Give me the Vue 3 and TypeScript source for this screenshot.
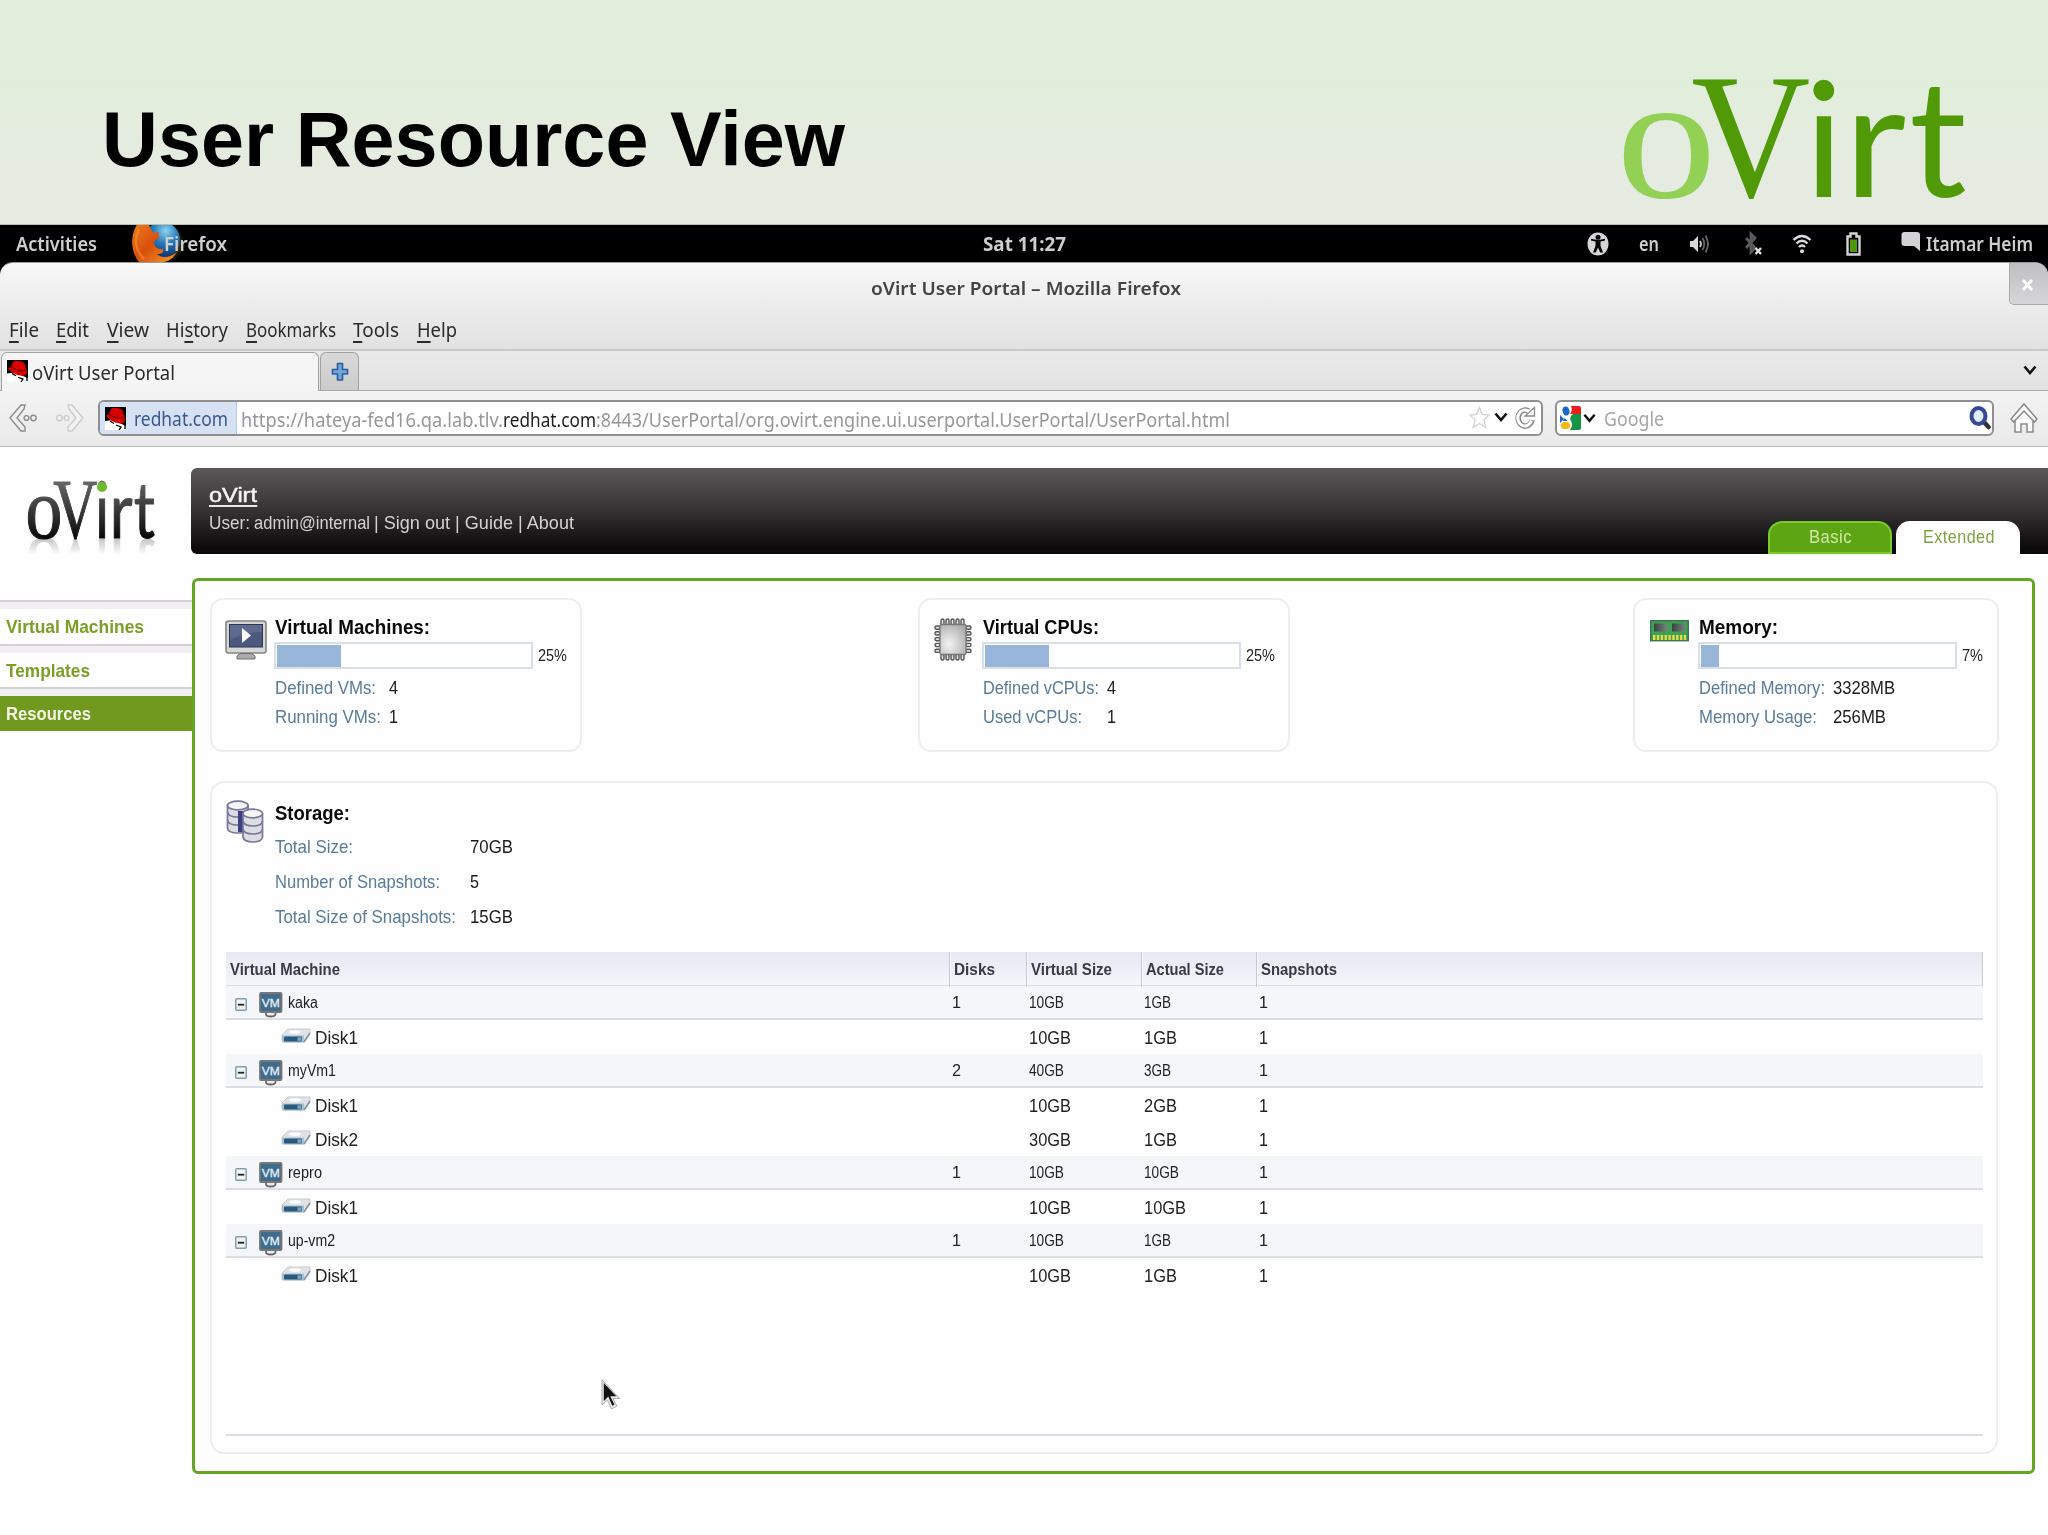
<script setup lang="ts">
import type { Directive } from 'vue'

// Condenses or widens a run of text to the given width in pixels.
const vFit: Directive<HTMLElement, number> = {
  mounted(el, binding) {
    el.style.display = 'inline-block'
    const natural = el.getBoundingClientRect().width
    el.style.transformOrigin = '0 50%'
    el.style.transform = `scaleX(${binding.value / natural})`
    el.style.marginRight = `${binding.value - natural}px`
  },
}

interface Glyph { ch: string; font: string; weight: number; x: number; y: number; sx: number; sy: number; cls: string }
const wordmark: Glyph[] = [
  { ch: 'o', font: 'Liberation Serif', weight: 400, x: 109, y: 441, sx: 6, sy: 5.36, cls: 'wm-o' },
  { ch: 'V', font: 'Liberation Serif', weight: 400, x: 334, y: 437, sx: 4.95, sy: 5.34, cls: 'wm-v' },
  { ch: 'i', font: 'Lato', weight: 400, x: 674, y: 441, sx: 4.8, sy: 4.8, cls: 'wm-s' },
  { ch: 'r', font: 'Lato', weight: 400, x: 793, y: 441, sx: 5.1, sy: 4.8, cls: 'wm-s' },
  { ch: 't', font: 'Lato', weight: 400, x: 988, y: 441, sx: 4.8, sy: 4.9, cls: 'wm-s' },
]

interface Menu { pre: string; key: string; post: string; w: number }
const menus: Menu[] = [
  { pre: '', key: 'F', post: 'ile', w: 30 },
  { pre: '', key: 'E', post: 'dit', w: 33 },
  { pre: '', key: 'V', post: 'iew', w: 42 },
  { pre: 'Hi', key: 's', post: 'tory', w: 62 },
  { pre: '', key: 'B', post: 'ookmarks', w: 90 },
  { pre: '', key: 'T', post: 'ools', w: 46 },
  { pre: '', key: 'H', post: 'elp', w: 40 },
]

const nav = [
  { label: 'Virtual Machines', w: 138, active: false },
  { label: 'Templates', w: 84, active: false },
  { label: 'Resources', w: 85, active: true },
]

interface Stat { label: string; w: number; value: string; vw: number }
interface Card { icon: string; title: string; tw: number; pct: string; pw: number; fill: number; labelCol: number; stats: Stat[] }
const cards: Card[] = [
  {
    icon: 'screen', title: 'Virtual Machines:', tw: 155, pct: '25%', pw: 29, fill: 64, labelCol: 114,
    stats: [{ label: 'Defined VMs:', w: 101, value: '4', vw: 9 }, { label: 'Running VMs:', w: 106, value: '1', vw: 9 }],
  },
  {
    icon: 'cpu', title: 'Virtual CPUs:', tw: 116, pct: '25%', pw: 29, fill: 64, labelCol: 124,
    stats: [{ label: 'Defined vCPUs:', w: 116, value: '4', vw: 9 }, { label: 'Used vCPUs:', w: 99, value: '1', vw: 9 }],
  },
  {
    icon: 'mem', title: 'Memory:', tw: 79, pct: '7%', pw: 21, fill: 18, labelCol: 134,
    stats: [{ label: 'Defined Memory:', w: 126, value: '3328MB', vw: 62 }, { label: 'Memory Usage:', w: 118, value: '256MB', vw: 53 }],
  },
]

const storage: Stat[] = [
  { label: 'Total Size:', w: 78, value: '70GB', vw: 43 },
  { label: 'Number of Snapshots:', w: 165, value: '5', vw: 9 },
  { label: 'Total Size of Snapshots:', w: 181, value: '15GB', vw: 43 },
]

const columns = [
  { label: 'Virtual Machine', w: 110 },
  { label: 'Disks', w: 41 },
  { label: 'Virtual Size', w: 81 },
  { label: 'Actual Size', w: 78 },
  { label: 'Snapshots', w: 76 },
]

interface Row { kind: 'group' | 'disk'; name: string; w: number; disks: string; virt: string; actual: string; snaps: string }
const rows: Row[] = [
  { kind: 'group', name: 'kaka', w: 30, disks: '1', virt: '10GB', actual: '1GB', snaps: '1' },
  { kind: 'disk', name: 'Disk1', w: 43, disks: '', virt: '10GB', actual: '1GB', snaps: '1' },
  { kind: 'group', name: 'myVm1', w: 48, disks: '2', virt: '40GB', actual: '3GB', snaps: '1' },
  { kind: 'disk', name: 'Disk1', w: 43, disks: '', virt: '10GB', actual: '2GB', snaps: '1' },
  { kind: 'disk', name: 'Disk2', w: 43, disks: '', virt: '30GB', actual: '1GB', snaps: '1' },
  { kind: 'group', name: 'repro', w: 34, disks: '1', virt: '10GB', actual: '10GB', snaps: '1' },
  { kind: 'disk', name: 'Disk1', w: 43, disks: '', virt: '10GB', actual: '10GB', snaps: '1' },
  { kind: 'group', name: 'up-vm2', w: 47, disks: '1', virt: '10GB', actual: '1GB', snaps: '1' },
  { kind: 'disk', name: 'Disk1', w: 43, disks: '', virt: '10GB', actual: '1GB', snaps: '1' },
]
const sizeWidth = (kind: string, text: string): number =>
  kind === 'group' ? (text.length === 4 ? 35 : 27) : text.length === 4 ? 42 : 33

const pins = [0, 1, 2, 3, 4]
</script>

<template>
  <div class="slide">
    <header class="banner">
      <h1 class="heading"><span v-fit="743">User Resource View</span></h1>
      <svg class="brand" viewBox="0 0 1404 522">
        <text
          v-for="g in wordmark" :key="g.ch" :class="g.cls" font-size="100"
          :font-family="g.font" :font-weight="g.weight"
          :transform="`translate(${g.x} ${g.y}) scale(${g.sx} ${g.sy})`"
        >{{ g.ch }}</text>
        <circle cx="731" cy="120" r="31" fill="#4f9a06" />
      </svg>
    </header>

    <div class="topbar">
      <span class="activities"><span v-fit="81">Activities</span></span>
      <span class="app">
        <svg class="fox" width="56" height="37" viewBox="0 0 56 37">
          <defs>
            <radialGradient id="globe" cx=".6" cy=".25" r=".75"><stop offset="0" stop-color="#8fd4ee" /><stop offset=".45" stop-color="#2a7dbd" /><stop offset="1" stop-color="#0c2c66" /></radialGradient>
            <linearGradient id="fur" x1="0" y1="0" x2="1" y2="1"><stop offset="0" stop-color="#ef7a1c" /><stop offset=".5" stop-color="#d94f0d" /><stop offset="1" stop-color="#f59a27" /></linearGradient>
            <radialGradient id="glow"><stop offset=".6" stop-color="#8d7413" stop-opacity=".8" /><stop offset="1" stop-color="#000" stop-opacity="0" /></radialGradient>
          </defs>
          <circle cx="34" cy="18" r="21" fill="url(#glow)" />
          <circle cx="31" cy="15" r="18" fill="url(#globe)" />
          <path d="M7-2C-1 9-1 26 8 37H33C39 36 43 32 45 28C38 33 30 33 26 29C32 29 33 26 32 24C27 25 24 22 23 18C23 15 26 14 29 13C27 11 27 10 28 7L23 8C20 5 18 2 18-2Z" fill="url(#fur)" />
          <path d="M8 4C3 14 4 25 13 34" fill="none" stroke="#f39531" stroke-width="2.5" opacity=".6" />
        </svg>
        <span class="app-name"><span v-fit="63">Firefox</span></span>
      </span>
      <span class="clock"><span v-fit="83">Sat 11:27</span></span>
      <span class="status">
        <svg width="22" height="24" viewBox="0 0 22 24" class="s-access"><ellipse cx="11" cy="12" rx="10.500" ry="11.500" fill="#d6d6d6" /><circle cx="11" cy="5.300" r="2.500" /><path d="M4 8.500L8.500 9.500V14L6 20.500H8.800L11 15.500L13.200 20.500H16L13.500 14V9.500L18 8.500V6.800L13 7.800H9L4 6.800Z" /></svg>
        <span class="s-lang"><span v-fit="20">en</span></span>
        <svg width="22" height="22" viewBox="0 0 22 22" class="s-vol"><path d="M1 8H4L9 3V19L4 14H1Z" fill="#d8d8d8" /><path d="M11 8Q13 11 11 14" fill="none" stroke="#c8c8c8" stroke-width="1.800" /><path d="M13.500 5Q17 11 13.500 17M16.500 2.500Q21.500 11 16.500 19.500" fill="none" stroke="#666" stroke-width="1.800" /></svg>
        <svg width="20" height="26" viewBox="0 0 20 26" class="s-bt"><path d="M2 7L11 17L7 21V3L11 7L2 17" fill="none" stroke="#5b5b5b" stroke-width="2.800" /><path d="M11.500 17L17 23M17 17L11.500 23" stroke="#e4e4e4" stroke-width="2.400" /></svg>
        <svg width="20" height="22" viewBox="0 0 20 22" class="s-wifi" fill="none" stroke="#dadada" stroke-width="2.400"><path d="M1.500 7Q10-1 18.500 7M4.500 10.500Q10 5 15.500 10.500M7 14Q10 11 13 14" /><circle cx="10" cy="18.300" r="2" fill="#dadada" stroke="none" /></svg>
        <svg width="16" height="24" viewBox="0 0 16 24" class="s-bat"><path d="M4.500 1.500H10.500V4.500H13.500V22.500H1.500V4.500H4.500Z" fill="#000" stroke="#d4d4d4" stroke-width="2.400" /><rect x="4" y="7.500" width="7" height="12.500" fill="#4e9a06" /></svg>
        <svg width="20" height="22" viewBox="0 0 20 22" class="s-chat"><path d="M3.500 1H16Q19 1 19 4V20L13 15H3.500Q.5 15 .5 12V4Q.5 1 3.500 1Z" fill="#d3d3d3" /></svg>
        <span class="s-user"><span v-fit="107">Itamar Heim</span></span>
      </span>
    </div>

    <div class="window-back">
      <div class="window">
        <div class="titlebar">
          <span class="win-title"><span v-fit="310">oVirt User Portal – Mozilla Firefox</span></span>
          <span class="win-close"><svg width="14" height="14" viewBox="0 0 14 14"><path d="M2 2L11 12M11 2L2 12" stroke="#fff" stroke-width="2.800" /></svg></span>
        </div>
        <nav class="menubar">
          <span v-for="m in menus" :key="m.key" v-fit="m.w">{{ m.pre }}<u>{{ m.key }}</u>{{ m.post }}</span>
        </nav>
        <div class="tabstrip">
          <div class="tab">
            <svg class="hat" width="21" height="22" viewBox="0 0 21 23" preserveAspectRatio="none"><rect width="21" height="23" fill="#000" /><path d="M0 14L8 13L21 19V23H0Z" fill="#fff" /><path d="M1 8.500L4 7L6 2Q8 0 11 1Q17 1 18 5L20 12Q20 17 15 16.500Q5 15 1 8.500Z" fill="#d80000" /><path d="M4 7Q10 12.500 18.500 10.500" fill="none" stroke="#7a0000" stroke-width="1.200" /><path d="M5 14L9 16.500M11 18L16 20L14 23M20 17V22" stroke="#000" stroke-width="1.300" fill="none" /></svg>
            <span class="tab-text"><span v-fit="143">oVirt User Portal</span></span>
          </div>
          <div class="tab-new"><svg width="18" height="20" viewBox="0 0 18 20"><path d="M6.500 1.500H11.500V7.500H16.500V12H11.500V18H6.500V12H1.500V7.500H6.500Z" fill="#6ea6dc" stroke="#2d5c98" stroke-width="1.600" stroke-linejoin="round" /></svg></div>
          <svg class="tab-list" width="14" height="10" viewBox="0 0 14 10"><path d="M1.500 1.500L7 8L12.500 1.500" fill="none" stroke="#111" stroke-width="2.600" /></svg>
        </div>
        <div class="toolbar">
          <svg class="t-back" width="29" height="30" viewBox="0 0 29 30" fill="#f0f0f0" stroke="#8c8c8c" stroke-width="1.400"><path d="M1 15L12 2H16L15 6L8 15L16 24V28H12Z" /><circle cx="17.500" cy="15" r="2.400" /><circle cx="24.500" cy="15" r="2.700" /></svg>
          <svg class="t-fwd" width="29" height="30" viewBox="0 0 29 30" fill="#f2f2f2" stroke="#ccc" stroke-width="1.400"><path d="M28 15L17 2H13L14 6L21 15L13 24V28H17Z" /><circle cx="11.500" cy="15" r="2.400" /><circle cx="4.500" cy="15" r="2.700" /></svg>
          <div class="urlbar">
            <div class="identity">
              <svg class="hat" width="21" height="23" viewBox="0 0 21 23"><rect width="21" height="23" fill="#000" /><path d="M0 14L8 13L21 19V23H0Z" fill="#fff" /><path d="M1 8.500L4 7L6 2Q8 0 11 1Q17 1 18 5L20 12Q20 17 15 16.500Q5 15 1 8.500Z" fill="#d80000" /><path d="M4 7Q10 12.500 18.500 10.500" fill="none" stroke="#7a0000" stroke-width="1.200" /><path d="M5 14L9 16.500M11 18L16 20L14 23M20 17V22" stroke="#000" stroke-width="1.300" fill="none" /></svg>
              <span class="id-text"><span v-fit="94">redhat.com</span></span>
            </div>
            <span class="url"><span v-fit="262">https://hateya-fed16.qa.lab.tlv.</span><span v-fit="93" class="host">redhat.com</span><span v-fit="634">:8443/UserPortal/org.ovirt.engine.ui.userportal.UserPortal/UserPortal.html</span></span>
            <span class="url-icons">
              <svg width="21" height="23" viewBox="0 0 21 23"><path d="M10.500 1.500L13.300 8.500L20 9L15 13.800L16.800 21.500L10.500 17.500L4.200 21.500L6 13.800L1 9L7.700 8.500Z" fill="#fff" stroke="#d2d2d2" stroke-width="1.300" /></svg>
              <svg width="14" height="10" viewBox="0 0 14 10"><path d="M1.500 1.500L7 8L12.500 1.500" fill="none" stroke="#111" stroke-width="2.600" /></svg>
              <svg class="u-reload" width="21" height="23" viewBox="0 0 21 23"><path d="M17 14A7 8 0 1 1 13.500 5" fill="none" stroke="#8a8a8a" stroke-width="5.600" /><path d="M10 10H19.500V1.500Z" fill="#fff" stroke="#8a8a8a" stroke-width="1.300" /><path d="M16.500 14.500A7 8 0 1 1 14 5.500" fill="none" stroke="#fff" stroke-width="3" /></svg>
            </span>
          </div>
          <div class="search">
            <svg width="21" height="24" viewBox="0 0 21 24"><rect width="21" height="24" rx="2" fill="#fff" /><path d="M11 0H19Q21 0 21 2V8H10Q13 4 11 0Z" fill="#ee1c1c" /><path d="M13 8H21V22Q21 24 19 24H10Q14 19 10 13Q11 9 13 8Z" fill="#159447" /><path d="M0 9L4 13L0 17Z" fill="#1c66c9" /><ellipse cx="6" cy="5" rx="3.400" ry="4.600" fill="#1c66c9" transform="rotate(-15 6 5)" /><path d="M4 12L8 15L3 15Z" fill="#1c66c9" /><ellipse cx="5.500" cy="19.500" rx="4.800" ry="3.800" fill="#f2b90f" /></svg>
            <svg class="s-chev" width="13" height="10" viewBox="0 0 14 10"><path d="M1.500 1.500L7 8L12.500 1.500" fill="none" stroke="#111" stroke-width="2.600" /></svg>
            <span class="hint"><span v-fit="60">Google</span></span>
            <svg class="s-mag" width="22" height="24" viewBox="0 0 22 24"><path d="M14 15L19.500 21" stroke="#333" stroke-width="4.500" stroke-linecap="round" /><ellipse cx="9.500" cy="10" rx="7" ry="8" fill="#e4edfb" stroke="#36489c" stroke-width="4" /></svg>
          </div>
          <svg class="t-home" width="28" height="32" viewBox="0 0 28 32" fill="#fafafa" stroke="#8a8a8a" stroke-width="1.500"><path d="M5 17V30H11V22H17V30H23V17L14 8Z" /><path d="M1 17L14 2L27 17L24.500 20L14 9L3.500 20Z" /></svg>
        </div>
      </div>
    </div>

    <main class="page">
      <div class="masthead">
        <div class="logo-box">
          <svg class="small-logo" width="130" height="62" viewBox="0 0 130 62">
            <defs><linearGradient id="ink" x1="0" y1="0" x2="0" y2="1"><stop offset=".2" stop-color="#686868" /><stop offset=".8" stop-color="#0c0c0c" /></linearGradient></defs>
            <g transform="translate(-15 -11.400) scale(.1232 .16)" fill="url(#ink)" stroke="url(#ink)" stroke-width="1.300">
              <text
                v-for="g in wordmark" :key="g.ch" font-size="100" :font-family="g.font" :font-weight="g.weight"
                :transform="`translate(${g.x} ${g.y}) scale(${g.sx} ${g.sy})`"
              >{{ g.ch }}</text>
            </g>
            <circle cx="75" cy="8" r="5" fill="#6dbb2a" />
          </svg>
        </div>
        <div class="bar">
          <div class="who">
            <div class="product"><span v-fit="48">oVirt</span></div>
            <div class="links"><span v-fit="41">User:</span><span v-fit="116" class="login">admin@internal</span><span v-fit="200">| Sign out | Guide | About</span></div>
          </div>
          <div class="modes">
            <span class="mode basic"><span v-fit="43">Basic</span></span>
            <span class="mode extended"><span v-fit="72">Extended</span></span>
          </div>
        </div>
      </div>

      <div class="body">
        <aside class="side">
          <div v-for="n in nav" :key="n.label" class="side-item" :class="{ active: n.active }">
            <div class="side-label"><span v-fit="n.w">{{ n.label }}</span></div>
          </div>
        </aside>

        <section class="panel">
          <div class="cards">
            <div v-for="c in cards" :key="c.title" class="card" :class="c.icon">
              <div class="card-icon">
                <svg v-if="c.icon === 'screen'" width="42" height="41" viewBox="0 0 42 41"><rect x="1" y="1" width="40" height="32" rx="2.500" fill="#d7d7d7" stroke="#858585" stroke-width="1.600" /><rect x="4.500" y="4.500" width="33" height="22.500" fill="#4c587e" stroke="#2e3650" /><path d="M5 5H37V12Q20 12 5 20Z" fill="#6c7899" opacity=".6" /><path d="M17 8L26 15.500L17 23Z" fill="#fff" /><path d="M15 33.500H27L30 36V39H12V36Z" fill="#aaa" stroke="#707070" /></svg>
                <svg v-else-if="c.icon === 'cpu'" width="38" height="43" viewBox="0 0 38 43">
                  <defs><radialGradient id="die" cx=".35" cy=".65" r=".8"><stop offset="0" stop-color="#f4f4f4" /><stop offset="1" stop-color="#a9a9a9" /></radialGradient></defs>
                  <g fill="#e4e4e4" stroke="#555" stroke-width="1.400">
                    <template v-for="p in pins" :key="p">
                      <rect :x="7 + p * 5" y="1" width="3" height="6" rx="1.500" /><rect :x="7 + p * 5" y="36" width="3" height="6" rx="1.500" />
                      <rect x="1" :y="8 + p * 5.800" width="5" height="3.200" rx="1.500" /><rect x="32" :y="8 + p * 5.800" width="5" height="3.200" rx="1.500" />
                    </template>
                  </g>
                  <rect x="6" y="6.500" width="26" height="30" rx="1.500" fill="url(#die)" stroke="#777" stroke-width="1.300" />
                </svg>
                <svg v-else width="39" height="22" viewBox="0 0 39 22">
                  <defs><linearGradient id="chip"><stop offset="0" stop-color="#39433f" /><stop offset="1" stop-color="#77827c" /></linearGradient></defs>
                  <rect x=".7" y=".7" width="37.600" height="20" fill="#3fa158" stroke="#3c7350" stroke-width="1.400" /><rect x="4" y="3.500" width="13" height="8" fill="url(#chip)" /><rect x="22" y="3.500" width="13" height="8" fill="url(#chip)" /><path d="M3 17.500H37" stroke="#e6dc3c" stroke-width="5" stroke-dasharray="2.400 1.450" />
                </svg>
              </div>
              <div class="card-body">
                <div class="card-title"><span v-fit="c.tw">{{ c.title }}</span></div>
                <div class="meter-row">
                  <div class="meter"><div class="meter-fill" :style="{ width: c.fill + 'px' }" /></div>
                  <span class="pct"><span v-fit="c.pw">{{ c.pct }}</span></span>
                </div>
                <div v-for="s in c.stats" :key="s.label" class="stat">
                  <span class="key" :style="{ width: c.labelCol + 'px' }"><span v-fit="s.w">{{ s.label }}</span></span>
                  <span><span v-fit="s.vw">{{ s.value }}</span></span>
                </div>
              </div>
            </div>
          </div>

          <div class="storage">
            <div class="storage-top">
              <svg class="storage-icon" width="38" height="43" viewBox="0 0 38 43">
                <g fill="#dcdce2" stroke="#77779a" stroke-width="1.700">
                  <path d="M1.500 5V28Q2 33 12 33Q22 33 22 28V5Z" /><path d="M1.500 12Q2 17 12 17Q22 17 22 12M1.500 20Q2 25 12 25Q22 25 22 20" fill="none" />
                  <ellipse cx="11.800" cy="5.500" rx="10.300" ry="4.300" fill="#f5f5f8" />
                  <rect x="12" y="11" width="6" height="21" fill="#3c4080" stroke="none" />
                  <path d="M17 14V37Q18 42 27 42Q36 42 36.500 37V14Z" /><path d="M17 21Q18 26 27 26Q36 26 36.500 21M17 29Q18 34 27 34Q36 34 36.500 29" fill="none" />
                  <ellipse cx="26.700" cy="13.500" rx="9.800" ry="4.300" fill="#f5f5f8" />
                </g>
              </svg>
              <div class="storage-body">
                <div class="card-title"><span v-fit="75">Storage:</span></div>
                <div v-for="s in storage" :key="s.label" class="stat tall">
                  <span class="key wide"><span v-fit="s.w">{{ s.label }}</span></span>
                  <span><span v-fit="s.vw">{{ s.value }}</span></span>
                </div>
              </div>
            </div>

            <div class="table">
              <div class="row head">
                <div v-for="c in columns" :key="c.label" class="hcell"><span v-fit="c.w">{{ c.label }}</span></div>
              </div>
              <div v-for="(r, i) in rows" :key="i" class="row" :class="r.kind">
                <div class="name">
                  <template v-if="r.kind === 'group'">
                    <svg class="toggle" width="12" height="13" viewBox="0 0 12 13"><rect x=".75" y=".75" width="10.500" height="11.500" rx="1" fill="#f3f3ee" stroke="#7fa0b8" stroke-width="1.500" /><path d="M2.800 6.700H9.200" stroke="#222" stroke-width="1.800" /></svg>
                    <svg class="vm-icon" width="24" height="26" viewBox="0 0 24 26"><path d="M7 19V22Q7 24.500 11.500 24.500Q16.500 24.500 16.500 22V19Z" fill="#eee" stroke="#666" stroke-width="1.800" /><rect x="1" y="1" width="21.500" height="19" rx="1" fill="#3f6c8d" stroke="#777" stroke-width="1.800" /><text x="2.800" y="14.500" font-family="Liberation Sans" font-size="11.500" font-weight="400" fill="#e4f0f8" stroke="#e4f0f8" stroke-width=".3" textLength="18" lengthAdjust="spacingAndGlyphs">VM</text></svg>
                  </template>
                  <svg v-else class="disk-icon" width="30" height="17" viewBox="0 0 30 17"><path d="M1 7L7 1H29V5L23 14H3Q1 14 1 12Z" fill="#e0e2e6" stroke="#c6cbd0" /><path d="M1 7.500H23V14.500H3Q1 14.500 1 13Z" fill="#a9bfce" /><rect x="3" y="8.500" width="18" height="5" rx="1" fill="#285a80" /><rect x="16.500" y="9.300" width="4" height="3.500" fill="#7fa3bb" /><path d="M23 14L29 5" stroke="#7b93a6" stroke-width="1.600" /><ellipse cx="14" cy="4" rx="6" ry="1.800" fill="#fff" /></svg>
                  <span v-fit="r.w">{{ r.name }}</span>
                </div>
                <div class="cell"><span v-if="r.disks" v-fit="9">{{ r.disks }}</span></div>
                <div class="cell"><span v-fit="sizeWidth(r.kind, r.virt)">{{ r.virt }}</span></div>
                <div class="cell"><span v-fit="sizeWidth(r.kind, r.actual)">{{ r.actual }}</span></div>
                <div class="cell"><span v-fit="9">{{ r.snaps }}</span></div>
              </div>
            </div>
          </div>
        </section>
      </div>
    </main>

    <svg class="pointer" width="20" height="32" viewBox="0 0 20 32"><path d="M2 2V24L7 19L11 28L14.500 26L10.500 18H17Z" fill="#111" stroke="#e8e8e8" stroke-width="1.600" /><path d="M1 1V26L6.500 21L10.500 30L16 27L12 19.500H18.500Z" fill="none" stroke="#999" stroke-width=".8" /></svg>
  </div>
</template>

<style>
body { margin: 0; background: #fefefe; }
</style>

<style scoped>
.slide { position: relative; width: 2048px; height: 1535px; overflow: hidden; display: flex; flex-direction: column; background: #fefefe; font-family: "Liberation Sans", Arial, sans-serif; white-space: nowrap; }
.slide svg { flex: none; display: block; }

.banner { box-sizing: border-box; height: 225px; flex: none; display: flex; justify-content: space-between; align-items: flex-start; background: linear-gradient(#e1eedb 30%, #e5ebe0 75%); border-bottom: 1px solid #b9c1b3; }
.heading { margin: 95px 0 0 102px; font-size: 77px; line-height: 88px; font-weight: 700; color: #000; }
.brand { width: 468px; height: 174px; margin-top: 50px; overflow: visible; }
.wm-o { fill: #92d056; }
.wm-v { fill: #4f9a06; }
.wm-s { fill: #4f9a06; }

.topbar { height: 37px; flex: none; display: grid; grid-template-columns: 1fr 82px 1fr; background: #000; color: #cfcfcf; font-family: "Noto Sans", sans-serif; font-size: 19px; font-weight: 600; line-height: 39px; align-items: start; grid-template-areas: "l c r"; }
.activities { grid-area: l; padding-left: 16px; }
.app { grid-area: l; display: flex; margin-left: 131px; height: 37px; }
.fox { margin-right: -23px; }
.app-name { position: relative; }
.clock { grid-area: c; font-weight: 700; }
.status { grid-area: r; display: flex; justify-content: flex-end; align-items: center; padding-right: 15px; height: 37px; font-weight: 600; }
.status > span { height: 37px; }
.s-lang { margin-left: 30px; }
.s-vol { margin-left: 30px; }
.s-bt { margin-left: 33px; }
.s-wifi { margin-left: 28px; }
.s-bat { margin-left: 34px; }
.s-chat { margin-left: 39px; margin-top: -4px; }
.s-user { margin-left: 5px; }

.window-back { background: #000; flex: none; }
.window { height: 185px; box-sizing: border-box; border-top: 1px solid #9a9a9e; border-radius: 13px 13px 0 0; overflow: hidden; background: linear-gradient(#f8f8f9, #ededee 40px, #e1e1e1 87px); font-family: "Noto Sans", sans-serif; display: flex; flex-direction: column; }
.titlebar { height: 48px; display: grid; grid-template-columns: 871px 1fr 39px; }
.win-title { grid-column: 2; font-size: 18.500px; line-height: 49px; font-weight: 650; color: #444; }
.win-close { height: 42px; box-sizing: border-box; border: solid #a9a9ab; border-width: 0 0 1px 1px; border-bottom-left-radius: 5px; background: linear-gradient(#bfbfc1, #d6d6d8); display: flex; align-items: center; justify-content: center; padding: 2px 2px 0 0; }
.menubar { height: 38px; display: flex; gap: 17.500px; padding-left: 8.500px; font-size: 19.500px; line-height: 38px; color: #2b2b2e; }
.menubar u { text-underline-offset: 4px; text-decoration-thickness: 2px; text-decoration-skip-ink: none; }
.tabstrip { border-top: 2px solid #cbcbcb; border-bottom: 1px solid #ababab; box-sizing: border-box; display: flex; align-items: flex-end; background: linear-gradient(#eaeaea, #e2e2e2); height: 42px; flex: none; }
.tab { width: 318px; height: 39px; margin: 0 0 -1px 1px; box-sizing: border-box; border: 1.500px solid #a2a2a2; border-bottom: 0; border-radius: 6px 6px 0 0; background: #f5f5f6; display: flex; align-items: center; padding-left: 6px; }
.hat { margin-left: -1px; }
.tab .hat { margin-top: -2px; }
.tab-text { margin-left: 4px; font-size: 19.500px; line-height: 36px; color: #2b2b2e; padding-top: 1px; }
.tab-new { width: 39px; height: 38px; margin-left: 1px; box-sizing: border-box; border: 1.500px solid #a2a2a2; border-bottom: 0; border-radius: 6px 6px 0 0; background: linear-gradient(#d9d9d9, #cbcbcb); display: flex; align-items: center; justify-content: center; }
.tab-list { margin: 0 11px 15px auto; }
.toolbar { height: 56px; box-sizing: border-box; border-bottom: 1px solid #b8b8b8; background: linear-gradient(#f3f3f3, #eaeaea); display: flex; align-items: center; padding: 0 10px 1px 8px; flex: none; }
.t-back { margin-left: 1px; }
.t-fwd { margin-left: 17px; }
.urlbar { margin-left: 14px; width: 1445px; height: 36px; box-sizing: border-box; border: 2px solid #8f8f91; border-radius: 6px; background: #fff; display: flex; overflow: hidden; }
.identity { width: 137px; box-sizing: border-box; border-right: 1px solid #b8c6dc; background: #d6e1f3; display: flex; align-items: center; padding-left: 6px; color: #3b5690; }
.id-text { margin-left: 8px; font-size: 19.500px; line-height: 34px; padding-top: 2px; }
.url { margin-left: 4px; font-size: 19.500px; line-height: 34px; color: #97979b; padding-top: 1px; }
.host { color: #1e1e22; }
.url-icons { margin-left: auto; display: flex; align-items: center; gap: 4px; margin-right: 5px; padding-bottom: 2px; }
.u-reload { margin-left: 3px; }
.search { margin-left: 12px; width: 439px; height: 36px; box-sizing: border-box; border: 2px solid #8f8f91; border-radius: 6px; background: #fff; display: flex; align-items: center; padding: 0 1px 0 3px; }
.s-chev { margin-left: 2px; }
.hint { margin-left: 8px; font-size: 19.500px; line-height: 32px; color: #a5a5a8; padding-top: 2px; }
.s-mag { margin-left: auto; }
.t-home { margin-left: auto; }

.page { flex: 1; min-height: 0; display: flex; flex-direction: column; }
.masthead { display: flex; margin-top: 21px; height: 86px; flex: none; }
.logo-box { width: 191px; }
.small-logo { margin: 11px 0 0 27px; overflow: visible; -webkit-box-reflect: below -5px linear-gradient(transparent 70%, rgba(0, 0, 0, .28)); }
.bar { flex: 1; border-radius: 6px 0 0 6px; background: linear-gradient(#5a5859, #383637 45%, #0c0a0b 92%); display: flex; justify-content: space-between; }
.who { padding: 15px 0 0 18px; color: #d2d2d2; font-size: 18.500px; }
.product { font-size: 20px; line-height: 24px; height: 24px; color: #f4f4f4; }
.product > span { border-bottom: 2px solid #e8e8e8; line-height: 20px; -webkit-text-stroke: .5px #f4f4f4; }
.links { line-height: 30px; padding-top: 1px; }
.login { margin-left: 4px; }
.links > span:last-child { margin-left: 4px; }
.modes { display: flex; gap: 4px; align-items: flex-end; margin-right: 28px; font-size: 17.500px; letter-spacing: .5px; }
.mode { width: 124px; height: 33px; box-sizing: border-box; border-radius: 14px 14px 0 0; text-align: center; line-height: 32px; padding-left: 1px; }
.basic { background: #5ea514; border: 2px solid #78cc2a; line-height: 28px; color: #d3e8a8; padding-left: 0; }
.extended { background: #fefefe; color: #7fa33c; }

.body { display: flex; margin-top: 24px; }
.side { width: 192px; padding-top: 22px; }
.side-item { height: 43.500px; box-sizing: border-box; border-top: 2px solid #d3d1d4; }
.side-label { border-top: 7px solid #f1eff1; line-height: 36px; height: 34px; padding-left: 6px; font-size: 19px; font-weight: 700; color: #7b9f26; }
.side-item.active .side-label { background: #71991f; color: #f2f8e4; height: 35px; line-height: 36px; }

.panel { box-sizing: border-box; width: 1843px; height: 896px; border: 3px solid #62a622; border-radius: 6px; padding: 17px 33px 0 15px; }
.cards { display: flex; justify-content: space-between; }
.card { box-sizing: border-box; width: 372px; height: 154px; border: 2px solid #f0edf0; border-radius: 13px; display: flex; padding-top: 17px; }
.card.mem { width: 366px; }
.card.cpu { margin-left: -8px; }
.card-icon { width: 62px; padding: 3px 0 0 13px; box-sizing: border-box; flex: none; }
.cpu .card-icon { padding: 1px 0 0 14px; }
.mem .card-icon { width: 63px; padding-left: 15px; }
.card-title { font-size: 20px; line-height: 20px; height: 20px; font-weight: 700; color: #0a0a0a; margin-left: 1px; }
.meter-row { display: flex; margin-top: 5px; height: 27px; margin-bottom: 4px; }
.meter { width: 259px; box-sizing: border-box; border: 2px solid #d9dfe8; background: #fff; padding: 1px; }
.meter-fill { height: 22px; background: #98b6d9; }
.pct { margin-left: 5px; font-size: 16px; line-height: 27px; color: #222; }
.stat { display: flex; line-height: 29px; font-size: 18.500px; color: #1b1b1b; }
.key { color: #587b9b; flex: none; margin-left: 1px; }
.stat.tall { line-height: 35px; }
.wide { width: 195px; }

.storage { margin-top: 29px; box-sizing: border-box; width: 1788px; height: 673px; border: 2px solid #f0edf0; border-radius: 14px; padding: 17px 13px 16px 14px; display: flex; flex-direction: column; }
.storage-top { display: flex; height: 152px; flex: none; }
.storage-icon { margin: 0 13px 0 0; }
.storage-body { padding-top: 3px; margin-left: -2px; }
.storage-body .card-title { margin-bottom: 6px; margin-left: 0; }
.storage-body .key { margin-left: 0; }

.table { flex: 1; width: 1757px; border-bottom: 2px solid #dbdce3; font-size: 16px; color: #222; }
.row { display: grid; grid-template-columns: 723px 77px 115px 115px 1fr; height: 34px; box-sizing: border-box; }
.head { background: linear-gradient(#e6e9f3, #f5f5fa); border-bottom: 1px solid #dcdde4; border-right: 1px solid #c9ccd6; }
.hcell { line-height: 35px; font-weight: 700; color: #3a3a42; padding-left: 4px; box-sizing: border-box; border-left: 1px solid #c6c9d4; box-shadow: inset 1px 0 #f8f8fc; }
.hcell:first-child { border-left: 0; box-shadow: none; }
.group { background: #f5f6fa; border-bottom: 2px solid #dcdde2; line-height: 33px; }
.disk { font-size: 18.500px; line-height: 36px; }
.name { display: flex; align-items: flex-start; }
.toggle { margin: 12px 0 0 9px; }
.vm-icon { margin: 6px 5px 0 12px; }
.disk-icon { margin: 8px 4px 0 55px; }
.cell { padding-left: 3px; }

.pointer { position: absolute; left: 601px; top: 1379px; }
</style>
